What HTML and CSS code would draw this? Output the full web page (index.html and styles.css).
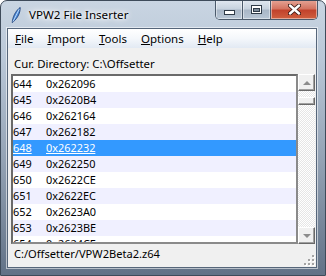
FILE: index.html
```html
<!DOCTYPE html>
<html lang="en">
<head>
    <meta charset="UTF-8">
    <title>VPW2 File Inserter</title>
    <link rel="stylesheet" href="styles.css">
</head>
<body>
    <div class="window">
        <div class="titlebar">
            <!-- feather icon -->
            <svg class="app-icon" width="10" height="16" viewBox="0 0 10 16">
                <path d="M1.2 15.6 C1.6 10 4.4 4 9.2 0.4 C9.4 5.2 7 11 2 15 Z" fill="#4a88d8" stroke="#1c3c74" stroke-width="0.8"/>
                <path d="M2 14.6 L8.2 2.2" stroke="#d6ecff" stroke-width="0.8"/>
            </svg>
            <span class="title">VPW2 File Inserter</span>
            <div class="controls">
                <div class="ctl ctl-min">
                    <svg width="11" height="5" viewBox="0 0 11 5"><rect x="0.5" y="0.5" width="10" height="4" fill="#fff" stroke="#2f3b48"/></svg>
                </div>
                <div class="ctl ctl-max">
                    <svg width="11" height="9" viewBox="0 0 11 9"><rect x="0.5" y="0.5" width="10" height="8" fill="#fff" stroke="#2f3b48"/><rect x="2.5" y="3.5" width="6" height="3" fill="#7d8b9a" stroke="#2f3b48"/></svg>
                </div>
                <div class="ctl ctl-close">
                    <svg width="13" height="11" viewBox="0 0 13 11">
                        <path d="M2 1.5 L11 9.5 M11 1.5 L2 9.5" stroke="#3a1a14" stroke-width="4.2" stroke-linecap="round"/>
                        <path d="M2 1.5 L11 9.5 M11 1.5 L2 9.5" stroke="#fff" stroke-width="2.4" stroke-linecap="round"/>
                    </svg>
                </div>
            </div>
        </div>

        <div class="client">
            <div class="menubar">
                <span class="menu"><u>F</u>ile</span>
                <span class="menu"><u>I</u>mport</span>
                <span class="menu"><u>T</u>ools</span>
                <span class="menu"><u>O</u>ptions</span>
                <span class="menu"><u>H</u>elp</span>
            </div>

            <div class="dir">Cur. Directory: C:\Offsetter</div>

            <div class="list-area">
                <div class="listbox">
                    <div class="row"><span class="num">644</span><span class="addr">0x262096</span></div>
                    <div class="row odd"><span class="num">645</span><span class="addr">0x2620B4</span></div>
                    <div class="row"><span class="num">646</span><span class="addr">0x262164</span></div>
                    <div class="row odd"><span class="num">647</span><span class="addr">0x262182</span></div>
                    <div class="row selected"><span class="num">648</span><span class="addr">0x262232</span></div>
                    <div class="row odd"><span class="num">649</span><span class="addr">0x262250</span></div>
                    <div class="row"><span class="num">650</span><span class="addr">0x2622CE</span></div>
                    <div class="row odd"><span class="num">651</span><span class="addr">0x2622EC</span></div>
                    <div class="row"><span class="num">652</span><span class="addr">0x2623A0</span></div>
                    <div class="row odd"><span class="num">653</span><span class="addr">0x2623BE</span></div>
                    <div class="row"><span class="num">654</span><span class="addr">0x2624CE</span></div>
                </div>
                <div class="scrollbar">
                    <div class="sb-btn"><span class="arrow-up"></span></div>
                    <div class="sb-track"><div class="sb-thumb"></div></div>
                    <div class="sb-btn"><span class="arrow-down"></span></div>
                </div>
            </div>

            <div class="status">
                <span>C:/Offsetter/VPW2Beta2.z64</span>
                <svg class="grip" width="12" height="12" viewBox="0 0 12 12">
                    <g fill="#fff">
                        <rect x="10" y="2" width="2" height="2"/>
                        <rect x="6" y="6" width="2" height="2"/><rect x="10" y="6" width="2" height="2"/>
                        <rect x="2" y="10" width="2" height="2"/><rect x="6" y="10" width="2" height="2"/><rect x="10" y="10" width="2" height="2"/>
                    </g>
                    <g fill="#a3a3a3">
                        <rect x="9" y="1" width="2" height="2"/>
                        <rect x="5" y="5" width="2" height="2"/><rect x="9" y="5" width="2" height="2"/>
                        <rect x="1" y="9" width="2" height="2"/><rect x="5" y="9" width="2" height="2"/><rect x="9" y="9" width="2" height="2"/>
                    </g>
                </svg>
            </div>
        </div>
    </div>
</body>
</html>
```

FILE: styles.css
```css
body {
    margin: 0;
    font-family: "Noto Sans", sans-serif;
    background-color: #ffffff;
}

.window {
    width: 326px;
    height: 276px;
    box-sizing: border-box;
    border: 1px solid #3e4b5a;
    border-radius: 7px 7px 0 0;
    background: linear-gradient(to bottom, #c9d5e2 0, #b9c7d7 60px, #93a2b4 160px, #617186 276px);
    display: flex;
    flex-direction: column;
    overflow: hidden;
}

/* title bar */
.titlebar {
    height: 27px;
    display: flex;
    align-items: flex-start;
    padding-left: 10px;
    box-sizing: border-box;
}

.app-icon {
    margin-top: 6px;
    flex-shrink: 0;
}

.title {
    margin: 6px 0 0 8px;
    font-size: 11.6px;
    line-height: 16px;
    color: #000;
    text-shadow: 0 0 6px #fff, 0 0 10px #fff, 0 0 3px #fff;
}

.controls {
    margin: -1px 7px 0 auto;
    display: flex;
    height: 20px;
    border: 1px solid #4b5a6b;
    border-top: none;
    border-radius: 0 0 5px 5px;
    overflow: hidden;
    box-sizing: border-box;
}

.ctl {
    height: 19px;
    display: flex;
    align-items: center;
    justify-content: center;
    box-shadow: inset 0 0 0 1px rgba(255, 255, 255, 0.45);
}

.ctl-min {
    width: 26px;
    background: linear-gradient(to bottom, #e2e9f1 0, #c8d3df 45%, #a9b7c7 55%, #b8c6d5 100%);
    border-right: 1px solid #4b5a6b;
}

.ctl-min svg {
    margin-top: 5px;
}

.ctl-max {
    width: 27px;
    background: linear-gradient(to bottom, #e2e9f1 0, #c8d3df 45%, #a9b7c7 55%, #b8c6d5 100%);
    border-right: 1px solid #4b5a6b;
}

.ctl-close {
    width: 46px;
    background: linear-gradient(to bottom, #e6a697 0, #d47562 45%, #c2432c 55%, #d0603f 100%);
}

/* client area */
.client {
    margin: 0 8px 0 6px;
    height: 240px;
    box-sizing: border-box;
    border: 1px solid #56667a;
    box-shadow: 0 0 0 1px rgba(255, 255, 255, 0.55);
    background-color: #f0f0f0;
    display: flex;
    flex-direction: column;
}

.menubar {
    height: 19px;
    display: flex;
    background: linear-gradient(to bottom, #ffffff 0, #f4f7fb 50%, #e2e9f3 100%);
    font-size: 11.5px;
    line-height: 19px;
}

.menu {
    padding: 0 7px;
}

.dir {
    height: 26px;
    box-sizing: border-box;
    padding: 8px 0 0 6px;
    font-size: 11.4px;
    line-height: 16px;
}

.list-area {
    height: 170px;
    display: flex;
    margin-left: 3px;
}

.listbox {
    width: 287px;
    box-sizing: border-box;
    border: 2px solid #707070;
    border-color: #6a6a6a #8a8a8a #8a8a8a #6a6a6a;
    background-color: #ffffff;
    overflow: hidden;
    font-size: 10.9px;
}

.row {
    height: 16px;
    line-height: 16px;
    display: flex;
    white-space: nowrap;
}

.row.odd {
    background-color: #f0f0ff;
}

.row.selected {
    background-color: #3399ff;
    color: #ffffff;
}

.row.selected span {
    text-decoration: underline;
}

.num {
    width: 33px;
}

/* scrollbar */
.scrollbar {
    width: 17px;
    display: flex;
    flex-direction: column;
}

.sb-btn {
    height: 17px;
    box-sizing: border-box;
    background-color: #f0f0f0;
    border: 1px solid;
    border-color: #ffffff #696969 #696969 #ffffff;
    box-shadow: inset -1px -1px 0 #a0a0a0;
    display: flex;
    align-items: center;
    justify-content: center;
}

.arrow-up {
    width: 0;
    height: 0;
    border-left: 4px solid transparent;
    border-right: 4px solid transparent;
    border-bottom: 4px solid #8c8c8c;
}

.arrow-down {
    width: 0;
    height: 0;
    border-left: 4px solid transparent;
    border-right: 4px solid transparent;
    border-top: 4px solid #8c8c8c;
}

.sb-track {
    flex: 1;
    padding-top: 6px;
    background: repeating-conic-gradient(#ffffff 0 25%, #e6e6e6 0 50%) 0 0 / 2px 2px;
}

.sb-thumb {
    height: 8px;
    box-sizing: border-box;
    background-color: #f0f0f0;
    border: 1px solid;
    border-color: #ffffff #696969 #696969 #ffffff;
    box-shadow: inset -1px -1px 0 #a0a0a0;
}

.status {
    flex: 1;
    display: flex;
    padding: 2px 1px 1px 6px;
    font-size: 11.1px;
    line-height: 16px;
}

.grip {
    margin-left: auto;
    align-self: flex-end;
}
```
